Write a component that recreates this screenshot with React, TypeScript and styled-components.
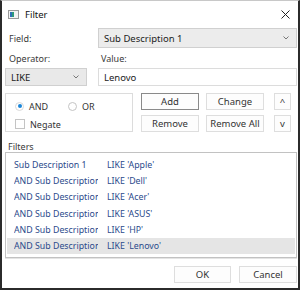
import styled, { createGlobalStyle, css } from "styled-components";

const GlobalStyle = createGlobalStyle`
  html, body {
    margin: 0;
    padding: 0;
    background: #ffffff;
  }
  body {
    font-family: "Noto Sans", "Open Sans", sans-serif;
    font-size: 9px;
    color: #333333;
  }
`;

const Window = styled.div`
  box-sizing: border-box;
  width: 300px;
  height: 290px;
  background: #ffffff;
  border-top: 1px solid #c8c8c8;
  border-left: 2px solid #2b2b2b;
  border-right: 2px solid #2b2b2b;
  border-bottom: 2px solid #2b2b2b;
  display: flex;
  flex-direction: column;
`;

const TitleBar = styled.div`
  height: 26px;
  display: flex;
  align-items: center;
  padding: 0 8px 0 6px;
  gap: 6px;
  font-size: 9.5px;
  color: #111;
`;

const TitleText = styled.span`
  flex: 1;
`;

const Body = styled.div`
  flex: 1;
  display: flex;
  flex-direction: column;
  padding: 1px 1px 0 3px;
`;

const TopGrid = styled.div`
  display: grid;
  grid-template-columns: 82px 1fr;
  column-gap: 11px;
  grid-template-rows: 20px 20px 18px;
`;

const Label = styled.span<{ $indent?: number }>`
  display: flex;
  align-items: center;
  padding-left: ${(p) => p.$indent ?? 4}px;
  color: #3a3a3a;
`;

const Combo = styled.div<{ $flat?: boolean }>`
  box-sizing: border-box;
  display: flex;
  align-items: center;
  justify-content: space-between;
  padding: 0 7px 0 5px;
  background: ${(p) => (p.$flat ? "#e9e9e9" : "#ececec")};
  border: 1px solid #d0d0d0;
  color: #222;
  font-size: 9.5px;
`;

const Input = styled.div`
  box-sizing: border-box;
  display: flex;
  align-items: center;
  padding-left: 5px;
  border: 1px solid #dcdcdc;
  color: #222;
  font-size: 9.5px;
`;

const ActionRow = styled.div`
  display: flex;
  margin-top: 7px;
`;

const GroupBox = styled.div`
  box-sizing: border-box;
  width: 128px;
  height: 39px;
  border: 1px solid #dcdcdc;
  padding: 5px 0 0 9px;
  display: flex;
  flex-direction: column;
  gap: 4px;
`;

const RadioRow = styled.div`
  display: flex;
  align-items: center;
  height: 14px;
`;

const Option = styled.label`
  display: flex;
  align-items: center;
  gap: 5px;
  width: 53px;
  color: #333;
`;

const Radio = styled.span<{ $checked?: boolean }>`
  box-sizing: border-box;
  width: 9px;
  height: 9px;
  border-radius: 50%;
  border: 1px solid #c4c4c4;
  background: #fff;
  position: relative;
  ${(p) =>
    p.$checked &&
    css`
      border-color: #d9d9d9;
      &::after {
        content: "";
        position: absolute;
        left: 1.5px;
        top: 1.5px;
        width: 4px;
        height: 4px;
        border-radius: 50%;
        background: #1a86d8;
      }
    `}
`;

const Check = styled.span`
  box-sizing: border-box;
  width: 10px;
  height: 10px;
  border: 1px solid #c4c4c4;
  background: #fff;
`;

const Buttons = styled.div`
  display: grid;
  grid-template-columns: 58px 58px 20px;
  grid-template-rows: 17px 17px;
  column-gap: 7px;
  row-gap: 5px;
  margin-left: 8px;
  & > :nth-child(3n) {
    margin-left: 3px;
  }
`;

const Button = styled.button<{ $primary?: boolean; $w?: number }>`
  box-sizing: border-box;
  margin: 0;
  padding: 0;
  width: ${(p) => (p.$w ? `${p.$w}px` : "auto")};
  height: 17px;
  background: #fdfdfd;
  border: 1px solid ${(p) => (p.$primary ? "#8a8a8a" : "#dedede")};
  font-family: inherit;
  font-size: 9.5px;
  color: #333;
  display: flex;
  align-items: center;
  justify-content: center;
`;

const SectionLabel = styled.div`
  margin-top: 9px;
  height: 11px;
  line-height: 11px;
  padding-left: 3px;
  color: #3a3a3a;
`;

const ListBox = styled.div`
  box-sizing: border-box;
  height: 106px;
  border: 1px solid #c2c2c2;
  box-shadow: 0 1px 0 #e4e4e4;
  padding: 4px 1px 0 1px;
  display: flex;
  flex-direction: column;
`;

const ListRow = styled.div<{ $selected?: boolean }>`
  display: grid;
  grid-template-columns: 93px 1fr;
  height: 16.2px;
  align-items: center;
  padding-left: 7px;
  font-size: 8.8px;
  color: #2b4a8b;
  background: ${(p) => (p.$selected ? "#e5e5e5" : "transparent")};
  white-space: nowrap;
`;

const FieldCell = styled.span`
  overflow: hidden;
  margin-right: 9px;
`;

const CondCell = styled.span`
  overflow: hidden;
`;

const Footer = styled.div`
  display: flex;
  justify-content: flex-end;
  gap: 8px;
  margin-top: 8px;
`;

const AppIcon = () => (
  <svg width="11" height="9" viewBox="0 0 11 9">
    <rect x="0.5" y="0.5" width="10" height="8" fill="#f4f4f4" stroke="#9a9a9a" />
    <rect x="2" y="2" width="4" height="5" fill="#2f9a78" />
    <rect x="2" y="2" width="2" height="5" fill="#2f6fb8" />
  </svg>
);

const CloseIcon = () => (
  <svg width="9" height="9" viewBox="0 0 9 9">
    <path d="M0.5 0.5 L8.5 8.5 M8.5 0.5 L0.5 8.5" stroke="#222" strokeWidth="1" />
  </svg>
);

const Chevron = () => (
  <svg width="6" height="4" viewBox="0 0 6 4">
    <path d="M0.5 0.5 L3 3 L5.5 0.5" fill="none" stroke="#777" strokeWidth="1" />
  </svg>
);

const filters = [
  { field: "Sub Description 1", cond: "LIKE 'Apple'" },
  { field: "AND Sub Description 1", cond: "LIKE 'Dell'" },
  { field: "AND Sub Description 1", cond: "LIKE 'Acer'" },
  { field: "AND Sub Description 1", cond: "LIKE 'ASUS'" },
  { field: "AND Sub Description 1", cond: "LIKE 'HP'" },
  { field: "AND Sub Description 1", cond: "LIKE 'Lenovo'" },
];

export default function App() {
  return (
    <>
      <GlobalStyle />
      <Window>
        <TitleBar>
          <AppIcon />
          <TitleText>Filter</TitleText>
          <CloseIcon />
        </TitleBar>
        <Body>
          <TopGrid>
            <Label>Field:</Label>
            <Combo>
              <span>Sub Description 1</span>
              <Chevron />
            </Combo>
            <Label>Operator:</Label>
            <Label $indent={3}>Value:</Label>
            <Combo $flat>
              <span>LIKE</span>
              <Chevron />
            </Combo>
            <Input>Lenovo</Input>
          </TopGrid>
          <ActionRow>
            <GroupBox>
              <RadioRow>
                <Option>
                  <Radio $checked />
                  AND
                </Option>
                <Option>
                  <Radio />
                  OR
                </Option>
              </RadioRow>
              <RadioRow>
                <Option>
                  <Check />
                  Negate
                </Option>
              </RadioRow>
            </GroupBox>
            <Buttons>
              <Button $primary>Add</Button>
              <Button>Change</Button>
              <Button>^</Button>
              <Button>Remove</Button>
              <Button>Remove All</Button>
              <Button>v</Button>
            </Buttons>
          </ActionRow>
          <SectionLabel>Filters</SectionLabel>
          <ListBox>
            {filters.map((f, i) => (
              <ListRow key={i} $selected={i === filters.length - 1}>
                <FieldCell>{f.field}</FieldCell>
                <CondCell>{f.cond}</CondCell>
              </ListRow>
            ))}
          </ListBox>
          <Footer>
            <Button $w={57}>OK</Button>
            <Button $w={58}>Cancel</Button>
          </Footer>
        </Body>
      </Window>
    </>
  );
}
